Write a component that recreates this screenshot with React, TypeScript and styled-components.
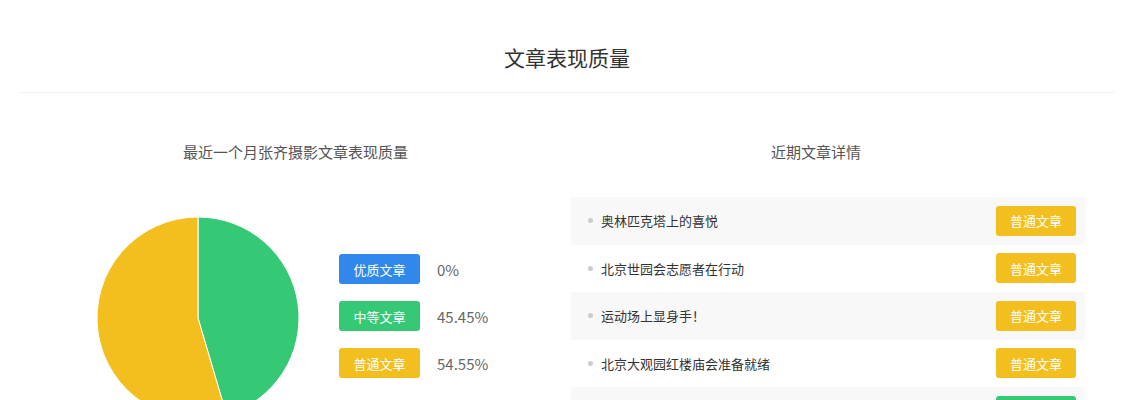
import React from "react";
import styled, { createGlobalStyle } from "styled-components";

const Global = createGlobalStyle`
  html, body { margin: 0; padding: 0; background: #fff; }
  body { font-family: "Noto Sans CJK SC", "Noto Sans", sans-serif; }
  * { box-sizing: border-box; }
`;

const COLORS = {
  blue: "#2f88ea",
  green: "#36c975",
  yellow: "#f3bf1f",
};

const Page = styled.div`
  width: 1134px;
  height: 400px;
  overflow: hidden;
`;

const Header = styled.div`
  margin: 0 20px;
  height: 93px;
  padding-top: 44px;
  border-bottom: 1px solid #f0f0f0;
  text-align: center;
`;

const Title = styled.h1`
  margin: 0;
  font-size: 21px;
  line-height: 26px;
  font-weight: 400;
  color: #333;
`;

const Columns = styled.div`
  display: flex;
  margin: 0 20px;
  padding-top: 49px;
`;

const LeftCol = styled.div`
  width: 551px;
  display: flex;
  flex-direction: column;
`;

const RightCol = styled.div`
  width: 514px;
  display: flex;
  flex-direction: column;
`;

const SubTitle = styled.div<{ $padRight?: number }>`
  font-size: 15px;
  line-height: 20px;
  color: #555;
  text-align: center;
  padding-right: ${(p) => p.$padRight ?? 0}px;
`;

const ChartRow = styled.div`
  display: flex;
  align-items: flex-start;
  margin-top: 54px;
  padding-left: 76px;
`;

const Legend = styled.div`
  display: flex;
  flex-direction: column;
  gap: 17px;
  margin-top: 38px;
  margin-left: 39px;
`;

const LegendItem = styled.div`
  display: flex;
  align-items: center;
`;

const Tag = styled.span<{ $color: string; $width?: number }>`
  display: inline-flex;
  align-items: center;
  justify-content: center;
  width: ${(p) => p.$width ?? 81}px;
  height: 30px;
  border-radius: 3px;
  background: ${(p) => p.$color};
  color: #fff;
  font-size: 13px;
  flex-shrink: 0;
`;

const Percent = styled.span`
  margin-left: 17px;
  font-size: 15px;
  color: #666;
`;

const List = styled.div`
  margin-top: 35px;
  display: flex;
  flex-direction: column;
`;

const Row = styled.div<{ $striped: boolean }>`
  display: flex;
  align-items: center;
  height: 47.5px;
  padding-left: 17px;
  padding-right: 9px;
  background: ${(p) => (p.$striped ? "#f8f8f8" : "#fff")};
`;

const Dot = styled.span`
  width: 5px;
  height: 5px;
  border-radius: 50%;
  background: #ccc;
  margin-right: 8px;
  flex-shrink: 0;
`;

const RowText = styled.span`
  flex: 1;
  font-size: 13px;
  color: #333;
`;

const Pie = () => {
  const cx = 102;
  const cy = 102;
  const r = 101;
  const frac = 0.4545;
  const a = frac * 2 * Math.PI;
  const ex = cx + r * Math.sin(a);
  const ey = cy - r * Math.cos(a);
  return (
    <svg width="204" height="204" viewBox="0 0 204 204">
      <path
        d={`M${cx} ${cy} L${cx} ${cy - r} A${r} ${r} 0 0 1 ${ex} ${ey} Z`}
        fill={COLORS.green}
        stroke="#fff"
        strokeWidth="1"
        strokeLinejoin="round"
      />
      <path
        d={`M${cx} ${cy} L${ex} ${ey} A${r} ${r} 0 1 1 ${cx} ${cy - r} Z`}
        fill={COLORS.yellow}
        stroke="#fff"
        strokeWidth="1"
        strokeLinejoin="round"
      />
    </svg>
  );
};

const legend = [
  { label: "优质文章", color: COLORS.blue, value: "0%" },
  { label: "中等文章", color: COLORS.green, value: "45.45%" },
  { label: "普通文章", color: COLORS.yellow, value: "54.55%" },
];

const articles = [
  { title: "奥林匹克塔上的喜悦", tag: "普通文章", color: COLORS.yellow },
  { title: "北京世园会志愿者在行动", tag: "普通文章", color: COLORS.yellow },
  { title: "运动场上显身手！", tag: "普通文章", color: COLORS.yellow },
  { title: "北京大观园红楼庙会准备就绪", tag: "普通文章", color: COLORS.yellow },
  { title: "京城春意浓", tag: "中等文章", color: COLORS.green },
];

export default function App() {
  return (
    <Page>
      <Global />
      <Header>
        <Title>文章表现质量</Title>
      </Header>
      <Columns>
        <LeftCol>
          <SubTitle>最近一个月张齐摄影文章表现质量</SubTitle>
          <ChartRow>
            <Pie />
            <Legend>
              {legend.map((l) => (
                <LegendItem key={l.label}>
                  <Tag $color={l.color}>{l.label}</Tag>
                  <Percent>{l.value}</Percent>
                </LegendItem>
              ))}
            </Legend>
          </ChartRow>
        </LeftCol>
        <RightCol>
          <SubTitle $padRight={24}>近期文章详情</SubTitle>
          <List>
            {articles.map((a, i) => (
              <Row key={i} $striped={i % 2 === 0}>
                <Dot />
                <RowText>{a.title}</RowText>
                <Tag $color={a.color} $width={80}>
                  {a.tag}
                </Tag>
              </Row>
            ))}
          </List>
        </RightCol>
      </Columns>
    </Page>
  );
}
